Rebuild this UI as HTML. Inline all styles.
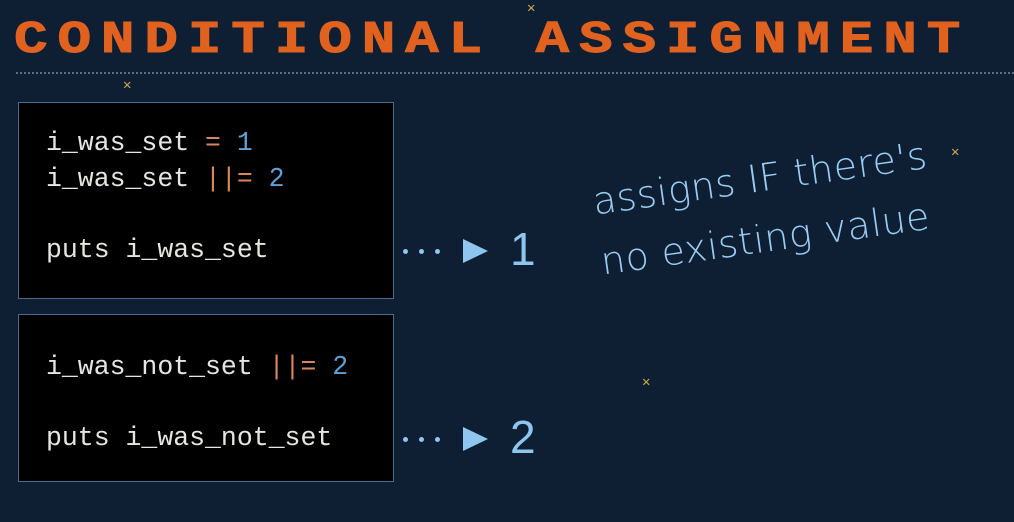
<!DOCTYPE html>
<html><head><meta charset="utf-8"><style>
html,body{margin:0;padding:0}
body{width:1014px;height:522px;background:#0e1e33;position:relative;overflow:hidden;font-family:"Liberation Mono",monospace}
.title{position:absolute;left:14px;top:15px;color:#e0621e;font:bold 50px "Liberation Mono",monospace;letter-spacing:8.8px;white-space:nowrap;transform:scale(1.12,0.9);transform-origin:0 0;-webkit-text-stroke:1px #e0621e}
.dots{position:absolute;left:16px;top:72px;width:998px;border-top:2px dotted #5a6e86}
.box{position:absolute;left:18px;width:374px;background:#000;border:1.5px solid #4a6a92}
.code{position:absolute;left:46px;color:#e6e6e0;font-size:26.5px;white-space:pre;line-height:35.5px}
.o{color:#d8865a}.b{color:#5ea0d8}
.arr{position:absolute;left:400px;color:#8ec6f0}
.arr .d{position:absolute;width:5px;height:5px;border-radius:50%;background:#8ec6f0;top:0}
.arr .t{position:absolute;left:63px;top:-10px;width:0;height:0;border-top:12px solid transparent;border-bottom:12px solid transparent;border-left:25px solid #8ec6f0}
.arr .n{position:absolute;left:110px;top:-27px;font:46px "Liberation Sans",sans-serif}
.hand{position:absolute;color:#98ccf2;font:38px "DejaVu Sans",sans-serif;font-weight:200;transform:rotate(-8deg);transform-origin:0 0;white-space:nowrap;letter-spacing:0.5px}
.star{position:absolute;color:#c9a84a;font-size:14px;line-height:14px}
</style></head><body>
<div class="title">CONDITIONAL ASSIGNMENT</div>
<div class="dots"></div>
<div class="star" style="left:123px;top:79px">✕</div>
<div class="star" style="left:527px;top:2px">✕</div>
<div class="star" style="left:951px;top:146px">✕</div>
<div class="star" style="left:642px;top:376px">✕</div>
<div class="box" style="top:102px;height:195px"></div>
<div class="box" style="top:314px;height:166px"></div>
<div class="code" style="top:126px">i_was_set <span class="o">=</span> <span class="b">1</span>
i_was_set <span class="o">||=</span> <span class="b">2</span>

puts i_was_set</div>
<div class="code" style="top:350px">i_was_not_set <span class="o">||=</span> <span class="b">2</span>

puts i_was_not_set</div>
<div class="arr" style="top:249px"><div class="d" style="left:3px"></div><div class="d" style="left:19px"></div><div class="d" style="left:35px"></div><div class="t"></div><div class="n">1</div></div>
<div class="arr" style="top:437px"><div class="d" style="left:3px"></div><div class="d" style="left:19px"></div><div class="d" style="left:35px"></div><div class="t"></div><div class="n">2</div></div>
<div class="hand" style="left:590px;top:180px">assigns IF there's</div>
<div class="hand" style="left:598px;top:240px">no existing value</div>
</body></html>
